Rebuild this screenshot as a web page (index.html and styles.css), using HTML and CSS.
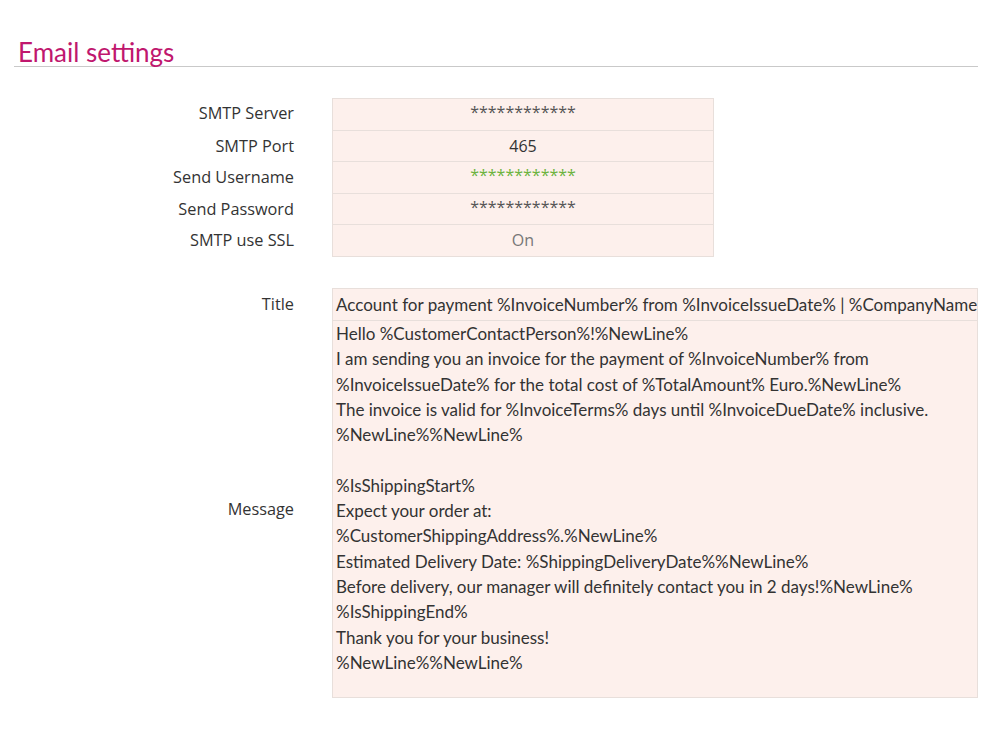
FILE: index.html
```html
<!DOCTYPE html>
<html lang="en">
<head>
    <meta charset="UTF-8">
    <title>Email settings</title>
    <link rel="stylesheet" href="styles.css">
</head>
<body>
    <div class="page">
        <h1 class="section-title">Email settings</h1>

        <!-- SMTP connection -->
        <div class="settings">
            <div class="label">SMTP Server</div>
            <div class="value first mask">************</div>
            <div class="label">SMTP Port</div>
            <div class="value">465</div>
            <div class="label">Send Username</div>
            <div class="value mask green">************</div>
            <div class="label">Send Password</div>
            <div class="value mask">************</div>
            <div class="label">SMTP use SSL</div>
            <div class="value muted">On</div>
        </div>

        <!-- Invoice email template -->
        <div class="template">
            <div class="label">Title</div>
            <div class="field title-field">Account for payment %InvoiceNumber% from %InvoiceIssueDate% | %CompanyName%</div>
            <div class="label">Message</div>
            <div class="field message-field">Hello %CustomerContactPerson%!%NewLine%
I am sending you an invoice for the payment of %InvoiceNumber% from
%InvoiceIssueDate% for the total cost of %TotalAmount% Euro.%NewLine%
The invoice is valid for %InvoiceTerms% days until %InvoiceDueDate% inclusive.
%NewLine%%NewLine%

%IsShippingStart%
Expect your order at:
%CustomerShippingAddress%.%NewLine%
Estimated Delivery Date: %ShippingDeliveryDate%%NewLine%
Before delivery, our manager will definitely contact you in 2 days!%NewLine%
%IsShippingEnd%
Thank you for your business!
%NewLine%%NewLine%</div>
        </div>
    </div>
</body>
</html>
```

FILE: styles.css
```css
html, body {
    margin: 0;
    padding: 0;
    background: #fff;
}
body {
    font-family: "Open Sans", sans-serif;
    color: #333;
}
.page {
    padding: 0 22px 0 14px;
}
.section-title {
    margin: 0;
    padding: 38px 0 0 4px;
    font-family: Lato, sans-serif;
    font-size: 26px;
    font-weight: 400;
    line-height: 28px;
    color: #c0176e;
    border-bottom: 1px solid #c9c9c9;
}
.label {
    font-size: 16.3px;
    text-align: right;
    color: #333;
}
/* SMTP block */
.settings {
    display: grid;
    grid-template-columns: 280px 382px;
    column-gap: 38px;
    margin-top: 31px;
}
.settings .label {
    line-height: 31.6px;
}
.value {
    height: 30.6px;
    line-height: 30.6px;
    text-align: center;
    font-size: 16px;
    background: #fdf0ec;
    border: 1px solid #e8dfdb;
    border-top: none;
}
.value.first {
    border-top: 1px solid #e8dfdb;
}
.value.mask {
    line-height: 26px;
    color: #555;
}
.value.green {
    color: #6cb33e;
}
.value.muted {
    color: #777;
}
/* Template block */
.template {
    display: grid;
    grid-template-columns: 280px 1fr;
    column-gap: 38px;
    margin-top: 31px;
    align-items: center;
}
.field {
    background: #fdf0ec;
    border: 1px solid #e8dfdb;
    font-family: Lato, sans-serif;
    font-size: 17px;
    color: #333;
    padding: 0 0 0 3px;
}
/* one-line input: long subjects run past the right edge */
.title-field {
    height: 31px;
    line-height: 31px;
    white-space: nowrap;
    overflow: hidden;
}
.message-field {
    border-top: none;
    height: 376px;
    padding-top: 0;
    line-height: 25.3px;
    white-space: pre-line;
}
```
